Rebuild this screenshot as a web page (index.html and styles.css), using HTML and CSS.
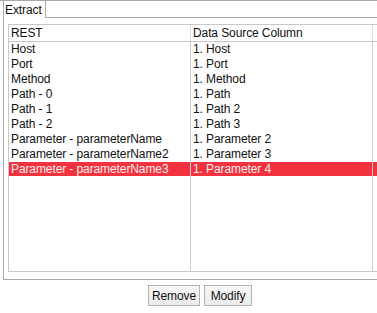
FILE: index.html
```html
<!DOCTYPE html>
<html>
<head>
<meta charset="utf-8">
<link rel="stylesheet" href="styles.css">
</head>
<body>
<div class="root">
  <div class="tabs">
    <div class="tab">Extract</div>
    <div class="tab-fill"></div>
  </div>
  <div class="panel">
    <div class="grid">
      <div class="row head">
        <div class="cell">REST</div>
        <div class="cell">Data Source Column</div>
        <div class="cell"></div>
      </div>
      <div class="body">
        <div class="row"><div class="cell">Host</div><div class="cell">1. Host</div><div class="cell"></div></div>
        <div class="row"><div class="cell">Port</div><div class="cell">1. Port</div><div class="cell"></div></div>
        <div class="row"><div class="cell">Method</div><div class="cell">1. Method</div><div class="cell"></div></div>
        <div class="row"><div class="cell">Path - 0</div><div class="cell">1. Path</div><div class="cell"></div></div>
        <div class="row"><div class="cell">Path - 1</div><div class="cell">1. Path 2</div><div class="cell"></div></div>
        <div class="row"><div class="cell">Path - 2</div><div class="cell">1. Path 3</div><div class="cell"></div></div>
        <div class="row"><div class="cell">Parameter - parameterName</div><div class="cell">1. Parameter 2</div><div class="cell"></div></div>
        <div class="row"><div class="cell">Parameter - parameterName2</div><div class="cell">1. Parameter 3</div><div class="cell"></div></div>
        <div class="row selected"><div class="cell">Parameter - parameterName3</div><div class="cell">1. Parameter 4</div><div class="cell"></div></div>
        <div class="row filler"><div class="cell"></div><div class="cell"></div><div class="cell"></div></div>
      </div>
    </div>
  </div>
  <div class="actions">
    <button class="btn btn-remove">Remove</button>
    <button class="btn btn-modify">Modify</button>
  </div>
</div>
</body>
</html>
```

FILE: styles.css
```css
html, body {
  margin: 0;
  padding: 0;
  background: #ffffff;
  overflow: hidden;
}
body {
  font-family: "Liberation Sans", Arial, sans-serif;
  font-size: 12px;
  color: #111111;
  letter-spacing: -0.1px;
}
.root {
  width: 377px;
  border-top: 1px solid #a9a9a9;
}
.tabs {
  display: flex;
  height: 17px;
}
.tab {
  margin-left: 3px;
  width: 43px;
  border-left: 1px solid #a9a9a9;
  border-right: 1px solid #a9a9a9;
  padding-left: 1px;
  padding-top: 2px;
  line-height: 15px;
  background: #ffffff;
  box-sizing: border-box;
}
.tab-fill {
  flex: 1;
  border-bottom: 1px solid #a9a9a9;
}
.panel {
  margin-left: 3px;
  border-left: 1px solid #a9a9a9;
  border-bottom: 1px solid #a9a9a9;
  padding: 6px 0 7px 4px;
}
.grid {
  height: 248px;
  box-sizing: border-box;
  border: 1px solid #c8c8c8;
  border-right: none;
  display: flex;
  flex-direction: column;
}
.row {
  display: grid;
  grid-template-columns: 182px 182px 1fr;
  height: 15px;
  line-height: 15px;
}
.cell {
  border-right: 1px solid #cccccc;
  padding-left: 2px;
  white-space: nowrap;
  overflow: hidden;
}
.cell:last-child {
  border-right: none;
}
.head {
  height: 17px;
  line-height: 16px;
  border-bottom: 1px solid #c8c8c8;
  box-sizing: border-box;
}
.head .cell {
  border-right-color: #e0e0e0;
}
.body {
  flex: 1;
  display: flex;
  flex-direction: column;
}
.row.selected {
  background: linear-gradient(#f2333f, #f2333f) no-repeat 0 0 / 100% 14px;
  color: #ffecee;
}
.row.filler {
  flex: 1;
}
.actions {
  display: flex;
  justify-content: center;
  gap: 4px;
  margin-top: 5px;
  padding-left: 23px;
}
.btn {
  font-family: "Liberation Sans", Arial, sans-serif;
  font-size: 12px;
  letter-spacing: -0.1px;
  color: #111111;
  height: 21px;
  padding: 0;
  margin: 0;
  border: 1px solid #b3b3b3;
  border-radius: 0;
  background: linear-gradient(#f7f7f7, #ebebeb);
  box-sizing: border-box;
}
.btn-remove {
  width: 52px;
}
.btn-modify {
  width: 48px;
}
```
